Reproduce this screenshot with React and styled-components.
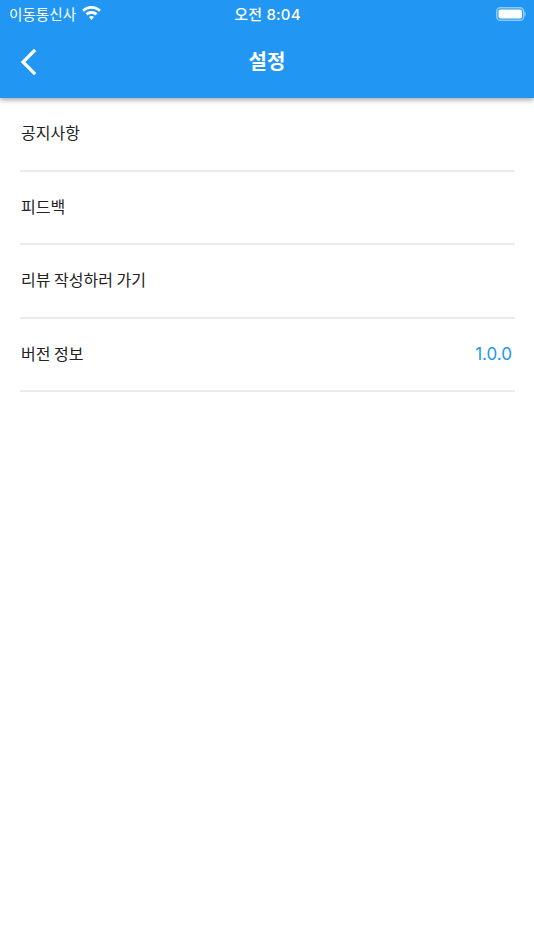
import React from 'react';
import styled, { createGlobalStyle } from 'styled-components';

const GlobalStyle = createGlobalStyle`
  html, body {
    margin: 0;
    padding: 0;
    background: #fff;
  }
  body {
    font-family: "Inter", "Noto Sans CJK KR", sans-serif;
  }
`;

const Page = styled.div`
  width: 534px;
  height: 950px;
  overflow: hidden;
  background: #fff;
`;

const Header = styled.header`
  height: 98px;
  background: #2196f3;
  box-shadow: 0 2px 5px rgba(0, 0, 0, 0.35);
  color: #fff;
  position: relative;
`;

const StatusBar = styled.div`
  height: 27px;
  padding: 0 8px 0 9px;
  display: grid;
  grid-template-columns: 1fr auto 1fr;
  align-items: center;
  font-size: 15px;
`;

const Carrier = styled.div`
  display: flex;
  align-items: center;
  gap: 6px;
  font-size: 14.6px;
  font-family: "Noto Sans CJK KR", sans-serif;
`;

const Clock = styled.div`
  font-weight: 500;
  letter-spacing: 0.2px;
  font-family: "Inter", "Noto Sans CJK KR", sans-serif;
`;

const BatteryWrap = styled.div`
  justify-self: end;
  display: flex;
`;

const NavBar = styled.div`
  height: 71px;
  display: grid;
  grid-template-columns: 1fr auto 1fr;
  align-items: center;
  padding: 0 20px 2px;
  box-sizing: border-box;
`;

const BackButton = styled.button`
  width: 18px;
  height: 28px;
  padding: 0;
  border: 0;
  background: none;
  color: inherit;
  display: flex;
`;

const Title = styled.h1`
  margin: 0 0 3px;
  font-size: 20px;
  font-weight: 700;
  font-family: "Noto Sans CJK KR", sans-serif;
`;

const List = styled.ul`
  list-style: none;
  margin: 0;
  padding: 0 19px 0 20px;
`;

const Row = styled.li`
  height: 73.5px;
  box-sizing: border-box;
  border-bottom: 2px solid #ebebeb;
  padding: 0 3px 3px 1px;
  display: flex;
  justify-content: space-between;
  align-items: center;
  font-size: 16px;
  color: #222;
  font-family: "Noto Sans CJK KR", sans-serif;
`;

const Version = styled.span`
  margin-top: 3px;
  color: #2196f3;
  font-size: 17px;
  font-family: "Inter", sans-serif;
`;

const WifiIcon = () => (
  <svg width="19" height="15" viewBox="0 0 19 15" fill="#fff">
    <path d="M9.5 0C5.9 0 2.6 1.4.1 3.7l1.9 2C4 3.9 6.6 2.8 9.5 2.8S15 3.9 17 5.7l1.9-2C16.4 1.4 13.1 0 9.5 0z" />
    <path d="M9.5 5C7.3 5 5.2 5.8 3.6 7.3l2 2.1C6.7 8.4 8 7.9 9.5 7.9s2.8.5 3.9 1.5l2-2.1C13.8 5.8 11.7 5 9.5 5z" />
    <path d="M9.5 10c-1 0-1.9.4-2.5.9L9.5 14l2.5-3.1c-.6-.5-1.5-.9-2.5-.9z" />
  </svg>
);

const BatteryIcon = () => (
  <svg width="30" height="14" viewBox="0 0 30 14">
    <rect x="0.75" y="0.75" width="26.9" height="12.5" rx="3.6" fill="none" stroke="#fff" strokeOpacity="0.5" strokeWidth="1.5" />
    <rect x="2.5" y="2.5" width="23.5" height="9" rx="1.8" fill="#fff" />
    <path d="M28.6 4.8c.8.3 1.3 1.2 1.3 2.2s-.5 1.9-1.3 2.2z" fill="#fff" fillOpacity="0.5" />
  </svg>
);

const BackIcon = () => (
  <svg width="18" height="28" viewBox="0 0 18 28" fill="none" stroke="#fff" strokeWidth="3.2" strokeLinecap="square">
    <path d="M14 3 3 14l11 11" />
  </svg>
);

const items = [
  { label: '공지사항' },
  { label: '피드백' },
  { label: '리뷰 작성하러 가기' },
  { label: '버전 정보', value: '1.0.0' },
];

const App = () => (
  <Page>
    <GlobalStyle />
    <Header>
      <StatusBar>
        <Carrier>
          이동통신사
          <WifiIcon />
        </Carrier>
        <Clock>오전 8:04</Clock>
        <BatteryWrap>
          <BatteryIcon />
        </BatteryWrap>
      </StatusBar>
      <NavBar>
        <BackButton>
          <BackIcon />
        </BackButton>
        <Title>설정</Title>
      </NavBar>
    </Header>
    <List>
      {items.map(item => (
        <Row key={item.label}>
          <span>{item.label}</span>
          {item.value ? <Version>{item.value}</Version> : null}
        </Row>
      ))}
    </List>
  </Page>
);

export default App;
